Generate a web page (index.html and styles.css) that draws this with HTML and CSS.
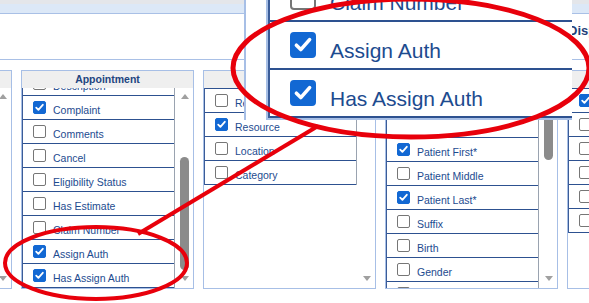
FILE: index.html
```html
<!DOCTYPE html>
<html>
<head>
<meta charset="utf-8">
<link rel="stylesheet" href="styles.css">
</head>
<body>
<div class="page">
  <div class="strip"></div>
  <div class="topbox"><span class="sect-title">Display Fields</span></div>

  <div class="panels">
    <section class="panel p0">
      <div class="phead">Account</div>
      <div class="pbody">
        <div class="list"></div>
        <div class="scroll">
          <svg class="arrow" width="8" height="5" viewBox="0 0 8 5"><path d="M4 0 L8 5 L0 5 Z"/></svg>
          <svg class="arrow down" width="8" height="5" viewBox="0 0 8 5"><path d="M0 0 L8 0 L4 5 Z"/></svg>
        </div>
      </div>
    </section>

    <section class="panel p1">
      <div class="phead">Appointment</div>
      <div class="pbody">
        <div class="list">
          <ul class="rows">
            <li class="row"><span class="cb"></span><span class="lbl">Description</span></li>
            <li class="row"><span class="cb on"><svg viewBox="0 0 11 11"><path d="M2.2 5.6 L4.4 7.8 L8.8 2.8"/></svg></span><span class="lbl">Complaint</span></li>
            <li class="row"><span class="cb"></span><span class="lbl">Comments</span></li>
            <li class="row"><span class="cb"></span><span class="lbl">Cancel</span></li>
            <li class="row"><span class="cb"></span><span class="lbl">Eligibility Status</span></li>
            <li class="row"><span class="cb"></span><span class="lbl">Has Estimate</span></li>
            <li class="row"><span class="cb"></span><span class="lbl">Claim Number</span></li>
            <li class="row"><span class="cb on"><svg viewBox="0 0 11 11"><path d="M2.2 5.6 L4.4 7.8 L8.8 2.8"/></svg></span><span class="lbl">Assign Auth</span></li>
            <li class="row"><span class="cb on"><svg viewBox="0 0 11 11"><path d="M2.2 5.6 L4.4 7.8 L8.8 2.8"/></svg></span><span class="lbl">Has Assign Auth</span></li>
          </ul>
        </div>
        <div class="scroll">
          <svg class="arrow" width="8" height="5" viewBox="0 0 8 5"><path d="M4 0 L8 5 L0 5 Z"/></svg>
          <div class="thumb"></div>
          <svg class="arrow down" width="8" height="5" viewBox="0 0 8 5"><path d="M0 0 L8 0 L4 5 Z"/></svg>
        </div>
      </div>
    </section>

    <section class="panel p2">
      <div class="phead">Provider</div>
      <div class="pbody">
        <div class="list">
          <ul class="rows">
            <li class="row"><span class="cb"></span><span class="lbl">Referral</span></li>
            <li class="row"><span class="cb on"><svg viewBox="0 0 11 11"><path d="M2.2 5.6 L4.4 7.8 L8.8 2.8"/></svg></span><span class="lbl">Resource</span></li>
            <li class="row"><span class="cb"></span><span class="lbl">Location</span></li>
            <li class="row"><span class="cb"></span><span class="lbl">Category</span></li>
          </ul>
        </div>
        <div class="scroll">
          <svg class="arrow" width="8" height="5" viewBox="0 0 8 5"><path d="M4 0 L8 5 L0 5 Z"/></svg>
          <svg class="arrow down" width="8" height="5" viewBox="0 0 8 5"><path d="M0 0 L8 0 L4 5 Z"/></svg>
        </div>
      </div>
    </section>

    <section class="panel p3">
      <div class="phead">Patient</div>
      <div class="pbody">
        <div class="list">
          <ul class="rows">
            <li class="row"><span class="cb"></span><span class="lbl">Chart Number</span></li>
            <li class="row blank"></li>
            <li class="row"><span class="cb on"><svg viewBox="0 0 11 11"><path d="M2.2 5.6 L4.4 7.8 L8.8 2.8"/></svg></span><span class="lbl">Patient First*</span></li>
            <li class="row"><span class="cb"></span><span class="lbl">Patient Middle</span></li>
            <li class="row"><span class="cb on"><svg viewBox="0 0 11 11"><path d="M2.2 5.6 L4.4 7.8 L8.8 2.8"/></svg></span><span class="lbl">Patient Last*</span></li>
            <li class="row"><span class="cb"></span><span class="lbl">Suffix</span></li>
            <li class="row"><span class="cb"></span><span class="lbl">Birth</span></li>
            <li class="row"><span class="cb"></span><span class="lbl">Gender</span></li>
            <li class="row"><span class="cb"></span><span class="lbl">Address</span></li>
          </ul>
        </div>
        <div class="scroll">
          <svg class="arrow" width="8" height="5" viewBox="0 0 8 5"><path d="M4 0 L8 5 L0 5 Z"/></svg>
          <div class="thumb"></div>
          <svg class="arrow down" width="8" height="5" viewBox="0 0 8 5"><path d="M0 0 L8 0 L4 5 Z"/></svg>
        </div>
      </div>
    </section>

    <section class="panel p4">
      <div class="phead"></div>
      <div class="pbody">
        <div class="list">
          <ul class="rows">
            <li class="row"><span class="cb on"><svg viewBox="0 0 11 11"><path d="M2.2 5.6 L4.4 7.8 L8.8 2.8"/></svg></span><span class="lbl">Date</span></li>
            <li class="row"><span class="cb"></span><span class="lbl">Time</span></li>
            <li class="row"><span class="cb"></span><span class="lbl">Duration</span></li>
            <li class="row"><span class="cb"></span><span class="lbl">Status</span></li>
            <li class="row"><span class="cb"></span><span class="lbl">Type</span></li>
            <li class="row"><span class="cb"></span><span class="lbl">Room</span></li>
          </ul>
        </div>
      </div>
    </section>
  </div>

  <div class="zoomview">
    <div class="zscale">
      <div class="zinner">
        <div class="zp0"></div>
        <div class="zgap"></div>
        <div class="zpanel">
          <div class="list">
            <ul class="rows">
              <li class="row"><span class="cb"></span><span class="lbl">Claim Number</span></li>
              <li class="row"><span class="cb on"><svg viewBox="0 0 11 11"><path d="M2.2 5.6 L4.4 7.8 L8.8 2.8"/></svg></span><span class="lbl">Assign Auth</span></li>
              <li class="row"><span class="cb on"><svg viewBox="0 0 11 11"><path d="M2.2 5.6 L4.4 7.8 L8.8 2.8"/></svg></span><span class="lbl">Has Assign Auth</span></li>
            </ul>
          </div>
        </div>
      </div>
    </div>
  </div>

  <svg class="annot" width="589" height="303" viewBox="0 0 589 303">
    <ellipse cx="411" cy="68" rx="178" ry="69" fill="none" stroke="#e8000b" stroke-width="5"/>
    <ellipse cx="96" cy="263" rx="91" ry="36" fill="none" stroke="#e8000b" stroke-width="4"/>
    <line x1="138" y1="234" x2="318" y2="126" stroke="#e8000b" stroke-width="4"/>
  </svg>
</div>
</body>
</html>
```

FILE: styles.css
```css
* { box-sizing: border-box; }
html, body { margin: 0; padding: 0; }
body {
  background: #fff;
  font-family: "Liberation Sans", Arial, sans-serif;
  font-size: 10.5px;
  color: #1d4b8f;
}
.page {
  position: relative;
  width: 589px;
  height: 303px;
  overflow: hidden;
}
.strip {
  height: 14px;
  border-top: 4px solid #e4e6ea;
  border-bottom: 1px solid #a9c0e6;
  background: #dce8f7;
}
.topbox {
  height: 46px;
  border-bottom: 1px solid #a9c0e6;
  padding: 9px 0 0 568px;
  white-space: nowrap;
}
.sect-title {
  font-weight: bold;
  font-size: 13px;
  line-height: 15px;
  color: #1f3f7a;
}
.panels {
  display: flex;
  gap: 9px;
  margin: 10px 0 0 -161px;
}
.panel {
  flex: 0 0 173px;
  height: 219px;
  border: 1px solid #a7bfe6;
  background: #fff;
}
.phead {
  height: 17px;
  background: #efefef;
  text-align: center;
  font-weight: bold;
  line-height: 17px;
  color: #22457f;
  white-space: nowrap;
  overflow: hidden;
}
.pbody {
  display: flex;
  height: 200px;
}
.list {
  width: 153px;
  flex: none;
  align-self: flex-start;
  max-height: 200px;
  overflow: hidden;
  border-left: 1px solid #3b5c98;
  border-right: 1px solid #9aa3b0;
}
.p0 .list { border: 0; }
.rows {
  list-style: none;
  margin: 0;
  padding: 0;
  border-top: 1px solid #2d5190;
}
.p1 .rows { margin-top: -17px; }
.p3 .rows { margin-top: 1px; }
.row {
  height: 24px;
  border-bottom: 1px solid #2d5190;
  display: flex;
  align-items: center;
  padding-left: 10px;
  white-space: nowrap;
}
.cb {
  width: 13px;
  height: 13px;
  border: 1px solid #767676;
  border-radius: 2px;
  background: #fff;
  flex: none;
  display: block;
}
.cb.on {
  background: #1268d3;
  border-color: #1268d3;
}
.cb svg {
  display: block;
  width: 11px;
  height: 11px;
  fill: none;
  stroke: #fff;
  stroke-width: 1.8;
  stroke-linecap: round;
  stroke-linejoin: round;
}
.lbl {
  margin-left: 7px;
  margin-top: 5px;
  line-height: 13px;
}
.scroll {
  width: 18px;
  flex: none;
  display: flex;
  flex-direction: column;
  align-items: flex-start;
  padding: 6px 0 7px 6px;
}
.arrow { display: block; fill: #a0a0a0; flex: none; }
.arrow.down { margin-top: auto; }
.thumb {
  width: 9px;
  margin-left: -1px;
  background: #8b8b8b;
  border-radius: 5px;
}
.p1 .thumb { margin-top: 58px; height: 113px; }
.p3 .thumb { margin-top: 1px; height: 60px; }

.zoomview {
  position: absolute;
  left: 244px;
  top: 0;
  width: 328px;
  height: 120px;
  overflow: hidden;
  background: #fff;
}
.zscale {
  display: flow-root;
  width: 164px;
  transform: scale(2);
  transform-origin: 0 0;
}
.zinner {
  display: flex;
  margin-top: -14px;
  height: 74px;
}
.zp0 { width: 1px; background: #a7bfe6; flex: none; }
.zgap { width: 10px; flex: none; }
.zpanel {
  flex: none;
  border-left: 1px solid #a7bfe6;
  border-bottom: 1px solid #a7bfe6;
}
.zpanel .list { max-height: none; }

.annot {
  position: absolute;
  left: 0;
  top: 0;
  pointer-events: none;
}
```
